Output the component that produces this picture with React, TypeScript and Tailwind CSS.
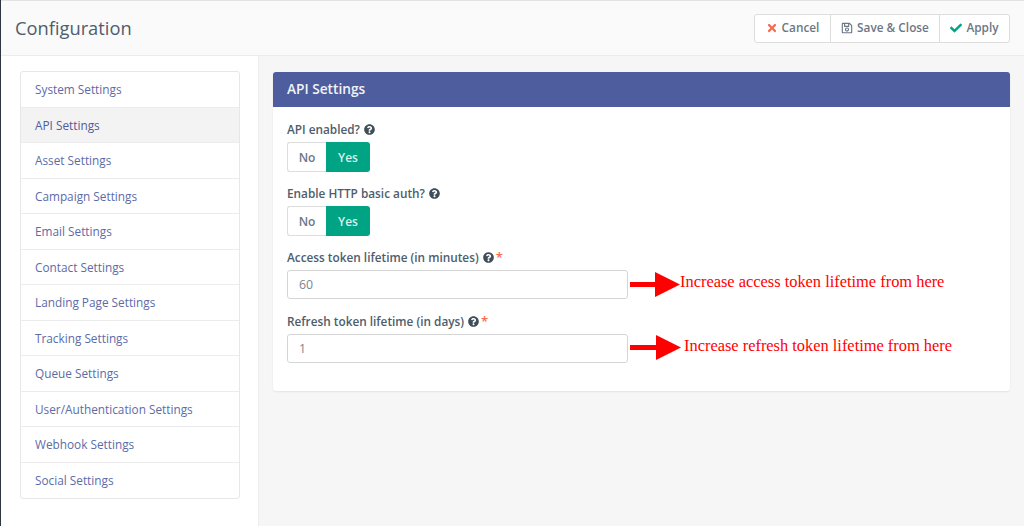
import React from 'react';
import { FaCheck, FaQuestionCircle, FaRegSave, FaTimes } from 'react-icons/fa';

const menuItems = [
  'System Settings',
  'API Settings',
  'Asset Settings',
  'Campaign Settings',
  'Email Settings',
  'Contact Settings',
  'Landing Page Settings',
  'Tracking Settings',
  'Queue Settings',
  'User/Authentication Settings',
  'Webhook Settings',
  'Social Settings',
];

function Toggle() {
  return (
    <div className="mt-[4px] flex h-[30px] w-[83px] text-[12px] font-semibold">
      <div className="flex w-[39px] items-center justify-center rounded-l-[3px] border border-r-0 border-[#dddddd] bg-white pt-[1px] text-[#6b7785]">
        No
      </div>
      <div className="flex w-[44px] items-center justify-center rounded-r-[3px] bg-[#00a383] pt-[1px] text-[#d9f1ec]">
        Yes
      </div>
    </div>
  );
}

function FieldLabel({ text, required }: { text: string; required?: boolean }) {
  return (
    <div className="flex h-[17px] items-center text-[11.8px] font-semibold text-[#4e5d6c]">
      <span>{text}</span>
      <FaQuestionCircle className="ml-[4px] text-[11px] text-[#3f4c5a]" />
      {required && <span className="ml-[2px] text-[13px] text-[#f86b4f]">*</span>}
    </div>
  );
}

function TokenField({ value }: { value: string }) {
  return (
    <div className="mt-[4px] flex h-[29px] w-[341px] items-center rounded-[3px] border border-[#d5d5d5] bg-white pl-[11px] pt-[2px] text-[12.3px] text-[#7a8591]">
      {value}
    </div>
  );
}

export default function App() {
  return (
    <div className="flex h-[526px] w-[1024px] flex-col overflow-hidden border-l border-[#2f3640] bg-white font-['Open_Sans',sans-serif]">
      <header className="flex h-[56px] shrink-0 items-center justify-between border-t border-b border-t-[#e2e2e2] border-b-[#ececec] bg-[#fafafa] pl-[14px] pr-[14px]">
        <h1 className="text-[18.3px] text-[#4e5d6c]">Configuration</h1>
        <div className="flex h-[29px] overflow-hidden rounded-[3px] border border-[#dddddd] bg-white text-[11.8px] font-semibold text-[#6b7785]">
          <button className="flex w-[76px] items-center justify-center gap-[4px] border-r border-[#dddddd]">
            <FaTimes className="text-[12px] text-[#f86b4f]" />
            Cancel
          </button>
          <button className="flex w-[109px] items-center justify-center gap-[4px] border-r border-[#dddddd]">
            <FaRegSave className="text-[12px]" />
            Save &amp; Close
          </button>
          <button className="flex w-[69px] items-center justify-center gap-[4px]">
            <FaCheck className="text-[12px] text-[#00a383]" />
            Apply
          </button>
        </div>
      </header>
      <div className="relative flex min-h-0 flex-1">
        <aside className="w-[258px] shrink-0 border-r border-[#ececec] pl-[19px] pt-[15px]">
          <nav className="w-[220px] overflow-hidden rounded-[3px] border border-[#e7e7e7] bg-white text-[11.8px]">
            {menuItems.map((item, i) => (
              <div
                key={item}
                className={`flex h-[35.5px] items-center border-[#ececec] pl-[14px] pt-[2px] ${
                  i < menuItems.length - 1 ? 'border-b' : ''
                } ${item === 'API Settings' ? 'bg-[#f3f3f3] text-[#4e5d9c]' : 'text-[#5c6ba8]'}`}
              >
                {item}
              </div>
            ))}
          </nav>
        </aside>
        <main className="min-w-0 flex-1 bg-[#f6f6f6] pl-[14px] pr-[14px] pt-[16px]">
          <section className="h-[319px] overflow-hidden rounded-[3px] bg-white shadow-[0_1px_2px_rgba(0,0,0,0.08)]">
            <div className="flex h-[35px] items-center bg-[#4e5d9d] pl-[14px] text-[13.7px] font-semibold text-[#f2f3f8]">
              API Settings
            </div>
            <div className="pl-[14px] pt-[14px]">
              <FieldLabel text="API enabled?" />
              <Toggle />
              <div className="mt-[13px]">
                <FieldLabel text="Enable HTTP basic auth?" />
                <Toggle />
              </div>
              <div className="mt-[13px]">
                <FieldLabel text="Access token lifetime (in minutes)" required />
                <TokenField value="60" />
              </div>
              <div className="mt-[14px]">
                <FieldLabel text="Refresh token lifetime (in days)" required />
                <TokenField value="1" />
              </div>
            </div>
          </section>
        </main>
        {/* red annotations drawn over the form */}
        <div className="absolute left-[629px] top-[216px] flex items-start">
          <svg width="50" height="25" viewBox="0 0 50 25" className="shrink-0">
            <rect x="0" y="10" width="26" height="5" fill="#ff0000" />
            <polygon points="25,0 50,12.5 25,25" fill="#ff0000" />
          </svg>
          <span className="-mt-[2px] whitespace-nowrap font-['Liberation_Serif',serif] text-[16.4px] text-[#ff0000]">
            Increase access token lifetime from here
          </span>
        </div>
        <div className="absolute left-[629px] top-[279px] flex items-start">
          <svg width="51" height="25" viewBox="0 0 51 25" className="shrink-0">
            <rect x="0" y="10" width="26" height="5" fill="#ff0000" />
            <polygon points="26,0 51,12.5 26,25" fill="#ff0000" />
          </svg>
          <span className="-mt-[1px] ml-[3px] whitespace-nowrap font-['Liberation_Serif',serif] text-[16.4px] text-[#ff0000]">
            Increase refresh token lifetime from here
          </span>
        </div>
      </div>
    </div>
  );
}
